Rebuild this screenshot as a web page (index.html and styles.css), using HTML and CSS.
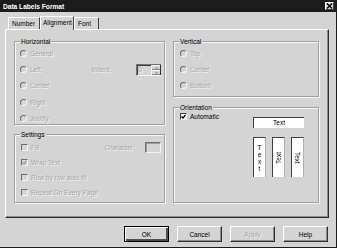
FILE: index.html
```html
<!DOCTYPE html>
<html>
<head>
<meta charset="utf-8">
<link rel="stylesheet" href="styles.css">
</head>
<body>
<div class="dialog">
  <div class="titlebar">
    <span class="title">Data Labels Format</span>
    <span class="close"><svg width="7" height="6" viewBox="0 0 7 6"><path d="M1 0.5 L6 5.5 M6 0.5 L1 5.5" stroke="#000" stroke-width="1.4"/></svg></span>
  </div>
  <div class="tabs">
    <div class="tab t-number">Number</div>
    <div class="tab t-align active">Alignment</div>
    <div class="tab t-font">Font</div>
  </div>
  <div class="panel">
    <div class="col col-left">
      <div class="group g-horiz">
        <span class="legend">Horizontal</span>
        <div class="rows rows-radio">
          <div class="row"><span class="opt"><i class="radio"></i><span class="dis">General</span></span></div>
          <div class="row">
            <span class="opt w-left"><i class="radio"></i><span class="dis">Left</span></span>
            <span class="dis w-indent">Indent:</span>
            <span class="spin"><span class="spin-edit"><span class="dis">0</span></span><span class="spin-btns"><span class="sb"><svg width="3" height="2" viewBox="0 0 3 2"><path d="M0 2 L1.5 0 L3 2Z" fill="#9a9a9a"/></svg></span><span class="sb"><svg width="3" height="2" viewBox="0 0 3 2"><path d="M0 0 L1.5 2 L3 0Z" fill="#9a9a9a"/></svg></span></span></span>
          </div>
          <div class="row"><span class="opt"><i class="radio"></i><span class="dis">Center</span></span></div>
          <div class="row"><span class="opt"><i class="radio"></i><span class="dis">Right</span></span></div>
          <div class="row"><span class="opt"><i class="radio"></i><span class="dis">Justify</span></span></div>
        </div>
      </div>
      <div class="group g-settings">
        <span class="legend">Settings</span>
        <div class="rows rows-check">
          <div class="row">
            <span class="opt w-fill"><i class="check"></i><span class="dis">Fill</span></span>
            <span class="dis w-char">Character:</span>
            <span class="charbox"></span>
          </div>
          <div class="row"><span class="opt"><i class="check"><svg width="5" height="5" viewBox="0 0 5 5"><path d="M0.5 2.5 L2 4 L4.5 0.8" stroke="#9a9a9a" stroke-width="1.2" fill="none"/></svg></i><span class="dis">Wrap Text</span></span></div>
          <div class="row"><span class="opt"><i class="check"></i><span class="dis">Row by row auto fit</span></span></div>
          <div class="row"><span class="opt"><i class="check"></i><span class="dis">Repeat On Every Page</span></span></div>
        </div>
      </div>
    </div>
    <div class="col col-right">
      <div class="group g-vert">
        <span class="legend">Vertical</span>
        <div class="rows rows-radio rows-vert">
          <div class="row"><span class="opt"><i class="radio"></i><span class="dis">Top</span></span></div>
          <div class="row"><span class="opt"><i class="radio"></i><span class="dis">Center</span></span></div>
          <div class="row"><span class="opt"><i class="radio"></i><span class="dis">Bottom</span></span></div>
        </div>
      </div>
      <div class="group g-orient">
        <span class="legend">Orientation</span>
        <div class="orient-body">
          <div class="auto"><i class="check on"><svg width="5" height="5" viewBox="0 0 5 5"><path d="M0.5 2.5 L2 4 L4.5 0.8" stroke="#000" stroke-width="1.2" fill="none"/></svg></i><span>Automatic</span></div>
          <div class="preview">
            <div class="hbox">Text</div>
            <div class="vboxes">
              <div class="vbox stacked"><span>T</span><span>e</span><span>x</span><span>t</span></div>
              <div class="vbox"><span class="up">Text</span></div>
              <div class="vbox"><span class="down">Text</span></div>
            </div>
          </div>
        </div>
      </div>
    </div>
  </div>
  <div class="buttons">
    <span class="btn default">OK</span>
    <span class="btn">Cancel</span>
    <span class="btn"><span class="dis">Apply</span></span>
    <span class="btn">Help</span>
  </div>
</div>
</body>
</html>
```

FILE: styles.css
```css
html, body {
  margin: 0;
  padding: 0;
  background: #d4d4d4;
}
body {
  font-family: "Liberation Sans", Arial, sans-serif;
  font-size: 6.5px;
  color: #000;
}
.dialog {
  width: 337px;
  height: 248px;
  box-sizing: border-box;
  background: #d4d4d4;
  border-right: 1px solid #1a1a1a;
  border-bottom: 1px solid #1a1a1a;
  display: flex;
  flex-direction: column;
  overflow: hidden;
}
.titlebar {
  height: 12px;
  background: #1c1c1c;
  display: flex;
  align-items: center;
  justify-content: space-between;
  padding: 0 2px 0 3px;
  color: #fff;
  font-weight: bold;
  font-size: 6.6px;
}
.close {
  width: 9px;
  height: 8px;
  box-sizing: border-box;
  background: #d4d4d4;
  border-top: 1px solid #fff;
  border-left: 1px solid #fff;
  border-right: 1px solid #404040;
  border-bottom: 1px solid #404040;
  display: flex;
  align-items: center;
  justify-content: center;
}
.tabs {
  height: 17px;
  display: flex;
  align-items: flex-end;
  padding-left: 8px;
}
.tab {
  height: 12px;
  line-height: 11px;
  box-sizing: border-box;
  border-top: 1px solid #fff;
  border-left: 1px solid #fff;
  border-right: 1px solid #404040;
  border-radius: 1px 1px 0 0;
  padding-left: 3px;
}
.t-number { width: 32px; }
.t-align { width: 34px; }
.t-font { width: 25px; }
.tab.active {
  height: 14px;
  line-height: 12px;
  margin-bottom: -1px;
  position: relative;
  z-index: 1;
  background: #d4d4d4;
  padding-left: 2px;
}
.panel {
  margin: 0 7px 0 5px;
  height: 189px;
  box-sizing: border-box;
  border-top: 1px solid #fff;
  border-left: 1px solid #fff;
  border-right: 1px solid #303030;
  border-bottom: 1px solid #303030;
  box-shadow: inset -1px -1px 0 #8c8c8c;
  display: flex;
  gap: 8px;
  padding: 11px 0 0 8px;
}
.col {
  display: flex;
  flex-direction: column;
}
.col-left { width: 151px; gap: 9px; }
.col-right { width: 146px; gap: 10px; }
.group {
  position: relative;
  box-sizing: border-box;
  border: 1px solid #a2a2a2;
  box-shadow: 1px 1px 0 #f4f4f4, inset 1px 1px 0 #f4f4f4;
}
.g-horiz { height: 84px; }
.g-settings { height: 69px; }
.g-vert { height: 56px; }
.g-orient { height: 96px; }
.legend {
  position: absolute;
  top: -5px;
  left: 5px;
  padding: 0 1px;
  background: #d4d4d4;
  line-height: 9px;
  color: #000;
}
.rows {
  display: flex;
  flex-direction: column;
}
.rows-radio {
  padding: 3px 3px 0 5px;
}
.rows-radio .row { height: 16.4px; }
.rows-vert { padding-left: 6px; }
.rows-check {
  padding: 5.6px 3px 0 6px;
}
.rows-check .row { height: 14.7px; }
.row {
  display: flex;
  align-items: center;
}
.opt {
  display: flex;
  align-items: center;
}
.dis {
  color: #a6a6a6;
  text-shadow: 1px 1px 0 #f6f6f6;
}
.radio {
  display: inline-block;
  width: 7px;
  height: 7px;
  box-sizing: border-box;
  border-radius: 50%;
  border: 1px solid;
  border-color: #6e6e6e #f4f4f4 #f4f4f4 #6e6e6e;
  background: #d4d4d4;
  margin-right: 3px;
}
.check {
  display: inline-flex;
  align-items: center;
  justify-content: center;
  width: 7px;
  height: 7px;
  box-sizing: border-box;
  border: 1px solid;
  border-color: #707070 #f4f4f4 #f4f4f4 #707070;
  background: #d4d4d4;
  margin-right: 3px;
}
.check.on {
  background: #f0f0f0;
  border-color: #404040 #f4f4f4 #f4f4f4 #404040;
}
.w-left { width: 72px; }
.w-indent { width: 45px; }
.spin {
  display: flex;
  width: 25px;
  height: 12px;
  box-sizing: border-box;
  border-top: 1px solid #707070;
  border-left: 1px solid #707070;
  border-bottom: 1px solid #f4f4f4;
}
.spin-edit {
  flex: 1;
  display: flex;
  align-items: center;
  padding-left: 1px;
  box-shadow: inset 1px 1px 0 #404040;
}
.spin-btns {
  width: 9px;
  display: flex;
  flex-direction: column;
  border-right: 1px solid #303030;
}
.sb {
  flex: 1;
  display: flex;
  align-items: center;
  justify-content: center;
  border-top: 1px solid #f4f4f4;
  border-left: 1px solid #f4f4f4;
  box-shadow: inset 0 -1px 0 #8c8c8c;
}
.w-fill { width: 84px; }
.w-char { width: 41px; }
.charbox {
  width: 16px;
  height: 11px;
  box-sizing: border-box;
  border: 1px solid;
  border-color: #707070 #f4f4f4 #f4f4f4 #707070;
  box-shadow: inset 1px 1px 0 #9a9a9a;
}
.orient-body {
  display: flex;
  align-items: flex-start;
  padding: 0 14px 0 6px;
}
.auto {
  display: flex;
  align-items: center;
  height: 10px;
  margin-top: 3px;
}
.preview {
  margin-left: auto;
  margin-top: 9px;
  width: 51px;
}
.hbox {
  height: 11px;
  box-sizing: border-box;
  background: #fff;
  border-top: 1px solid #404040;
  border-left: 1px solid #404040;
  text-align: center;
  line-height: 10px;
}
.vboxes {
  display: flex;
  gap: 6px;
  margin-top: 9px;
}
.vbox {
  width: 13px;
  height: 40px;
  box-sizing: border-box;
  background: #fff;
  border-top: 1px solid #404040;
  border-left: 1px solid #404040;
  border-right: 1px solid #b0b0b0;
  display: flex;
  align-items: center;
  justify-content: center;
}
.vbox.stacked {
  flex-direction: column;
  line-height: 7px;
}
.up {
  writing-mode: vertical-rl;
  transform: rotate(180deg);
}
.down {
  writing-mode: vertical-rl;
}
.buttons {
  display: flex;
  justify-content: flex-end;
  gap: 8px;
  padding: 8px 8px 0 0;
}
.btn {
  width: 45px;
  height: 16px;
  box-sizing: border-box;
  border-top: 1px solid #fff;
  border-left: 1px solid #fff;
  border-right: 1px solid #303030;
  border-bottom: 1px solid #303030;
  box-shadow: inset -1px -1px 0 #8c8c8c;
  display: flex;
  align-items: center;
  justify-content: center;
}
.btn.default {
  border: 1px solid #000;
  box-shadow: inset 1px 1px 0 #fff, inset -2px -2px 0 #505050;
}
```
